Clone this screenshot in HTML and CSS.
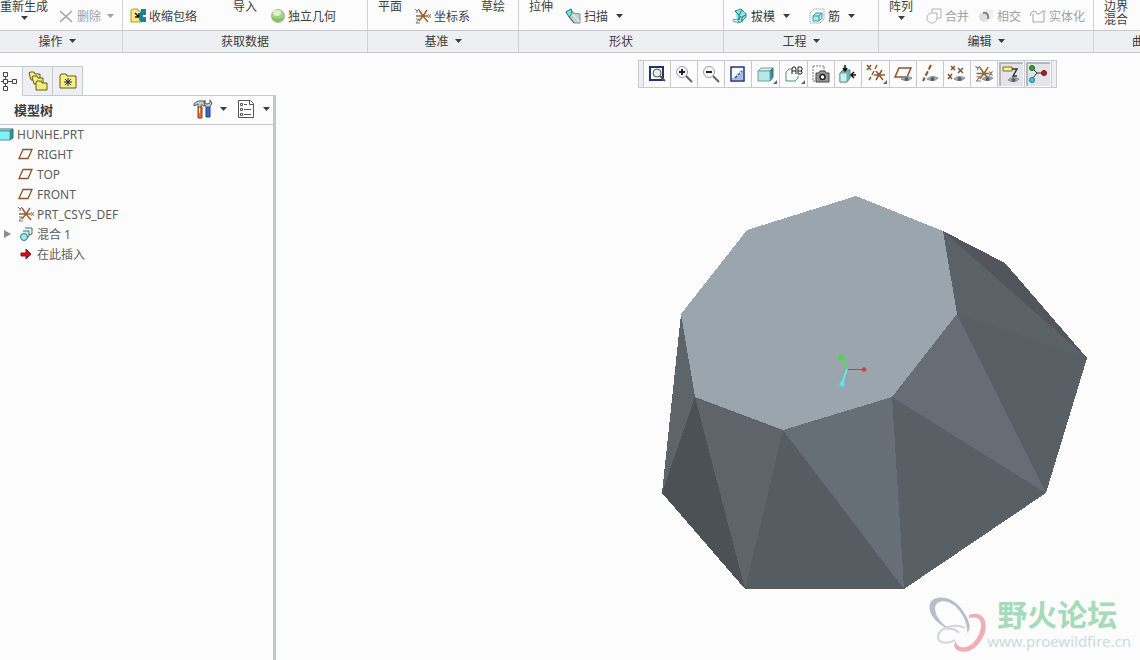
FILE: index.html
```html
<!DOCTYPE html>
<html lang="zh-CN">
<head>
  <meta charset="UTF-8">
  <meta name="viewport" content="width=device-width, initial-scale=1.0">
  <title>HUNHE.PRT</title>
  <link rel="stylesheet" href="styles.css">
</head>
<body>
  <!-- shared icon parts -->
  <svg class="defs" aria-hidden="true">
    <symbol id="caret" viewBox="0 0 7 4"><path d="M0 0h7L3.5 4z" fill="currentColor"/></symbol>
    <symbol id="csys" viewBox="0 0 16 16">
      <path d="M1 8h12M8 8L4 2M8 8l4-6M8 8l-4 5M8 8l5 6" stroke="#9a6231" stroke-width="1.5" fill="none"/>
      <path d="M0 1l2 2 2-2M2 3v2M13 6l3 4M16 6l-3 4M1 11h3l-3 4h4" stroke="#777" fill="none"/>
    </symbol>
    <symbol id="plane" viewBox="0 0 16 16"><path d="M5 3.5h9l-4 9H1z" fill="none" stroke="#8a5328" stroke-width="1.3"/></symbol>
    <symbol id="eye" viewBox="0 0 12 8">
      <path d="M0 4Q5-1 12 3Q7 8 0 4z" fill="#a9adb1" stroke="#84888c"/>
      <circle cx="6" cy="4" r="2.2" fill="#52616c"/>
    </symbol>
  </svg>

  <div class="ribbon">
    <div class="group clipped">
      <div class="tools">
        <button class="big">重新生成<svg class="caret"><use href="#caret"/></svg></button>
        <button class="small" disabled>
          <svg class="icon" viewBox="0 0 16 16"><path d="M0 3l12 11M12 3L0 14" stroke="#a3a3a3" stroke-width="1.5"/></svg>
          删除<svg class="caret"><use href="#caret"/></svg>
        </button>
      </div>
      <button class="caption">操作<svg class="caret"><use href="#caret"/></svg></button>
    </div>
    <div class="group">
      <div class="tools shrink">
        <button class="small">
          <svg class="icon" viewBox="0 0 16 16">
            <path d="M1 2l2-1h5v2h4v11H1z" fill="#f7ec78" stroke="#a79d35"/>
            <path d="M9 4h2V1h5v6h-3v2h3v5h-5l-2-2z" fill="#178789"/>
            <path d="M5 4h5v6H5z" fill="#fff"/>
            <path d="M5 5l4 4M9 5v4H5" stroke="#111" stroke-width="1.5" fill="none"/>
          </svg>
          收缩包络
        </button>
        <button class="big">导入</button>
        <button class="small">
          <svg class="icon" viewBox="0 0 16 16">
            <circle cx="9" cy="8" r="6.5" fill="#a3d283" stroke="#b4b5b0"/>
            <path d="M3 9q6 3 12 0a6 5 0 0 1-12 0z" fill="#86c067"/>
            <ellipse cx="8" cy="5" rx="4" ry="3" fill="#dcf2cd"/>
          </svg>
          独立几何
        </button>
      </div>
      <div class="caption">获取数据</div>
    </div>
    <div class="group">
      <div class="tools datum">
        <button class="big">平面</button>
        <button class="small"><svg class="icon"><use href="#csys"/></svg>坐标系</button>
        <button class="big">草绘</button>
      </div>
      <button class="caption">基准<svg class="caret"><use href="#caret"/></svg></button>
    </div>
    <div class="group">
      <div class="tools">
        <button class="big">拉伸</button>
        <button class="small">
          <svg class="icon" viewBox="0 0 16 16">
            <path d="M1 4l5-3 2 4 7 1v9H9L5 9z" fill="#c4d2d4" stroke="#7b9094"/>
            <path d="M1 4l5-3 1 4-3 4z" fill="#72e3e5" stroke="#2a7f83"/>
            <path d="M4 9l5 6" stroke="#1e6468"/>
            <path d="M7 6l8 8" stroke="#fff"/>
          </svg>
          扫描<svg class="caret"><use href="#caret"/></svg>
        </button>
      </div>
      <div class="caption">形状</div>
    </div>
    <div class="group">
      <div class="tools wide">
        <button class="small">
          <svg class="icon" viewBox="0 0 16 16">
            <path d="M3 3l6-2 5 5v4l-4 4-4 1z" fill="#8fe6e8"/>
            <path d="M3 3l6-2 5 5v3l-5 5-4 1" fill="none" stroke="#3a8e90"/>
            <path d="M3 3l4 4v5M7 7l3-5M10 14V9l4-2M1 12h5l3-4" fill="none" stroke="#206d70"/>
            <path d="M1 12l4-1 2 3H2z" fill="#d5f5f3" stroke="#6aa9aa"/>
          </svg>
          拔模<svg class="caret"><use href="#caret"/></svg>
        </button>
        <button class="small">
          <svg class="icon" viewBox="0 0 16 16">
            <path d="M1 5l4-4h10v10l-4 4H1zM11 15l4-4" fill="none" stroke="#7f8a8c" stroke-dasharray="1 1"/>
            <path d="M4 8l3-3h6v5l-3 3H4z" fill="#a5eeee" stroke="#3b9b9d"/>
            <path d="M4 8h6v5M10 8l3-3" fill="none" stroke="#3b9b9d"/>
          </svg>
          筋<svg class="caret"><use href="#caret"/></svg>
        </button>
      </div>
      <button class="caption">工程<svg class="caret"><use href="#caret"/></svg></button>
    </div>
    <div class="group">
      <div class="tools edit">
        <button class="big">阵列<svg class="caret"><use href="#caret"/></svg></button>
        <button class="small" disabled>
          <svg class="icon" viewBox="0 0 16 16"><path d="M6 5V1h9v9h-4a5 5 0 1 1-5-5h5v5" fill="none" stroke="#b3b3b3"/></svg>
          合并
        </button>
        <button class="small" disabled>
          <svg class="icon" viewBox="0 0 16 16">
            <path d="M6 1h9v9l-4 2z" fill="#eeeeee"/>
            <circle cx="6" cy="9" r="5" fill="#dedede"/>
            <path d="M5 5q6-1 5 6" fill="none" stroke="#858585" stroke-width="2"/>
          </svg>
          相交
        </button>
        <button class="small" disabled>
          <svg class="icon" viewBox="0 0 16 16"><path d="M0 8q1-5 4-5 2 0 3 3h2l4-3h3M3 6v8h11V4" fill="none" stroke="#a5a5a5"/></svg>
          实体化
        </button>
      </div>
      <button class="caption">编辑<svg class="caret"><use href="#caret"/></svg></button>
    </div>
    <div class="group">
      <div class="tools">
        <button class="big">边界<br>混合</button>
      </div>
      <button class="caption">曲面<svg class="caret"><use href="#caret"/></svg></button>
    </div>
  </div>

  <div class="workspace">
    <aside class="navigator">
      <div class="tabs">
        <button class="tab active" aria-label="模型树">
          <svg viewBox="0 0 20 20"><path d="M5.500 1.500h4v4h-4zM5.500 8.500h4v4h-4zM5.500 15.500h4v4h-4zM14.500 8.500h4v4h-4zM7.500 5.500v3M7.500 12.500v3M9.500 10.500h5M3 10.500h2" fill="none" stroke="#444"/></svg>
        </button>
        <button class="tab" aria-label="文件夹">
          <svg viewBox="0 0 20 20" fill="#f5ed79" stroke="#5f5a20">
            <path d="M1 2l1-1h4l1 2h5v6H3z"/><path d="M4 6l1-1h4l1 2h5v6H6z"/><path d="M8 11l1-1h4l1 2h5v7H8z"/>
          </svg>
        </button>
        <button class="tab" aria-label="收藏夹">
          <svg viewBox="0 0 20 20">
            <path d="M2 5l1-2h5l1 2h9v12H2z" fill="#f8f17a" stroke="#5f5a20"/>
            <path d="M10 7v8M6 11h8M7 8l6 6M13 8l-6 6" stroke="#15206b"/>
          </svg>
        </button>
      </div>
      <div class="panel">
        <div class="panel-head">
          <h1>模型树</h1>
          <button aria-label="设置">
            <svg class="tool" viewBox="0 0 20 20">
              <path d="M5 8h4v11H5z" fill="#e5762a" stroke="#823c14"/>
              <path d="M6.500 8v6" stroke="#fff"/>
              <path d="M1 5q3-4 9-3l2 2v3h-2V6H8v2H5V5L1 7z" fill="#c6cbd0" stroke="#5b5f63"/>
              <path d="M13 8h4v10h-4z" fill="#2f6cc9" stroke="#1e3c76"/>
              <path d="M12 1v3l2 1 3-1V1l2 3-2 4h-4l-2-4z" fill="#c6cbd0" stroke="#5b5f63"/>
            </svg>
            <svg class="caret"><use href="#caret"/></svg>
          </button>
          <button aria-label="显示">
            <svg class="tool" viewBox="0 0 20 20">
              <path d="M2.500 1.500h12l3 3v14h-15z" fill="#fff" stroke="#555"/>
              <path d="M13.500 1.500v4h4M8 5.500h3M8 10.500h7M8 15.500h7" fill="none" stroke="#555"/>
              <path d="M4.500 4.500h2v2h-2zM4.500 9.500h2v2h-2zM4.500 14.500h2v2h-2z" fill="none" stroke="#555"/>
            </svg>
            <svg class="caret"><use href="#caret"/></svg>
          </button>
        </div>
        <ul class="tree">
          <li class="root">
            <svg class="icon" viewBox="0 0 16 16">
              <path d="M0 5l2-2h13l-2 2z" fill="#c8ffff" stroke="#2d7779"/>
              <path d="M12 5l3-2v9l-3 2z" fill="#349295" stroke="#2d7779"/>
              <path d="M0 5h12v9H0z" fill="#7ff3f5" stroke="#4d9799"/>
            </svg>HUNHE.PRT
          </li>
          <li><svg class="icon"><use href="#plane"/></svg>RIGHT</li>
          <li><svg class="icon"><use href="#plane"/></svg>TOP</li>
          <li><svg class="icon"><use href="#plane"/></svg>FRONT</li>
          <li><svg class="icon"><use href="#csys"/></svg>PRT_CSYS_DEF</li>
          <li class="branch">
            <svg class="arrow" viewBox="0 0 8 8"><path d="M0 0l7 4-7 4z" fill="#8c8c8c"/></svg>
            <svg class="icon" viewBox="0 0 16 16">
              <path d="M7 2h7v6l-3 1" fill="#e6f3f5" stroke="#3e747c"/>
              <path d="M5 5h6v5l-3 2" fill="#d4eef0" stroke="#3e747c"/>
              <circle cx="6" cy="11" r="3.5" fill="#9cecee" stroke="#2b7a80"/>
            </svg>混合 1
          </li>
          <li>
            <svg class="icon" viewBox="0 0 16 16"><path d="M3 7h5V3l5 5-5 5V10H3z" fill="#c8141c" stroke="#8c1015"/></svg>在此插入
          </li>
        </ul>
      </div>
    </aside>

    <main class="viewport">
      <div class="view-bar">
        <button aria-label="重新调整">
          <svg viewBox="0 0 20 20">
            <path d="M3 3h13v13H3z" fill="#fff" stroke="#1d3573" stroke-width="2"/>
            <circle cx="10" cy="9" r="4" fill="#e3eef5" stroke="#555"/><path d="M13 12l5 5" stroke="#6c4f4f" stroke-width="2"/>
          </svg>
        </button>
        <button aria-label="放大">
          <svg viewBox="0 0 20 20">
            <circle cx="8" cy="8" r="5.500" fill="#f7f9fa" stroke="#9ba0a5"/><path d="M8 5v6M5 8h6" stroke="#222" stroke-width="2"/>
            <path d="M12 12l6 6" stroke="#7b5652" stroke-width="2"/>
          </svg>
        </button>
        <button aria-label="缩小">
          <svg viewBox="0 0 20 20">
            <circle cx="8" cy="8" r="5.500" fill="#f7f9fa" stroke="#9ba0a5"/><path d="M5 8h6" stroke="#222" stroke-width="2"/>
            <path d="M12 12l6 6" stroke="#7b5652" stroke-width="2"/>
          </svg>
        </button>
        <button aria-label="重画">
          <svg viewBox="0 0 20 20">
            <path d="M3 3h13v14H3z" fill="#f4f8fd" stroke="#1d3573" stroke-width="1.500"/>
            <path d="M4 14q7 0 11-8v10H4z" fill="#9dbfe8"/><path d="M7 14l7-7" stroke="#33558c" stroke-width="1.500" stroke-dasharray="3 1"/>
          </svg>
        </button>
        <button class="more" aria-label="显示样式">
          <svg viewBox="0 0 20 20">
            <path d="M2 7l3-3h12l-3 3z" fill="#d6f4f3" stroke="#78a0a3"/><path d="M14 7l3-3v9l-3 4z" fill="#2f8d90" stroke="#2d7678"/>
            <path d="M2 7h12v10H2z" fill="#b5e9e8" stroke="#78a0a3"/>
          </svg>
        </button>
        <button class="more" aria-label="已命名视图">
          <svg viewBox="0 0 20 20">
            <path d="M8 5H5L2 8v9h9l3-3v-2" fill="none" stroke="#439095"/>
            <path d="M8 10V5l1-2h2l1 2v5M8 7h4M14 3h3l1 1v2l-1 1h-3M17 7l1 1v1l-1 1h-3V3" fill="none" stroke="#222"/>
          </svg>
        </button>
        <button aria-label="视图管理器">
          <svg viewBox="0 0 20 20">
            <path d="M2 2h11v5M2 2v15h4" fill="none" stroke="#777" stroke-dasharray="2 1"/>
            <path d="M5 9h3l1-2h5l1 2h3v9H5z" fill="#999994" stroke="#444"/><circle cx="11.500" cy="13" r="2.500" fill="#fff" stroke="#222" stroke-width="1.500"/>
          </svg>
        </button>
        <button aria-label="透视">
          <svg viewBox="0 0 20 20">
            <path d="M2 9l3-3h7v8l-3 4H2z" fill="#62b9ba" stroke="#577f82"/><path d="M2 9h7v9H2z" fill="#c7efee" stroke="#78a0a3"/>
            <path d="M7 1v6M5 4l2 3 2-3M18 11h-5M16 8l-3 3 3 3" fill="none" stroke="#111" stroke-width="1.500"/>
          </svg>
        </button>
        <button class="more" aria-label="基准显示过滤器">
          <svg viewBox="0 0 20 20" fill="none" stroke="#8b592f" stroke-width="1.500">
            <path d="M1 1l4 5M5 1L1 6M11 1L9 5M8 7l-2 4M5 13l-2 3M8 11h11M10 7l7 9M16 6l-6 10"/>
          </svg>
        </button>
        <button aria-label="平面显示">
          <svg viewBox="0 0 20 20">
            <path d="M6 4h12l-4 9H2z" fill="none" stroke="#8b532a" stroke-width="1.500"/><use href="#eye" x="8" y="11" width="11" height="8"/>
          </svg>
        </button>
        <button aria-label="轴显示">
          <svg viewBox="0 0 20 20">
            <path d="M11 1L3 17" stroke="#8b532a" stroke-width="2" stroke-dasharray="5 2"/><use href="#eye" x="7" y="11" width="11" height="8"/>
          </svg>
        </button>
        <button aria-label="点显示">
          <svg viewBox="0 0 20 20">
            <path d="M4 2l4 4M8 2L4 6M11 4l5 5M16 4l-5 5M1 10l4 5M5 10l-4 5" stroke="#8b532a" stroke-width="1.500"/><use href="#eye" x="7" y="11" width="11" height="8"/>
          </svg>
        </button>
        <button aria-label="坐标系显示">
          <svg viewBox="0 0 20 20">
            <use href="#csys" x="1" y="1" width="18" height="17"/><use href="#eye" x="8" y="11" width="11" height="8"/>
          </svg>
        </button>
        <button class="pressed" aria-label="注释显示" aria-pressed="true">
          <svg viewBox="0 0 20 20">
            <path d="M2 3h9v4H2z" fill="#fbf487" stroke="#78702b"/><path d="M11 5h5l-4 7h4" fill="none" stroke="#333" stroke-width="1.500"/>
            <use href="#eye" x="7" y="12" width="11" height="8"/>
          </svg>
        </button>
        <button class="pressed" aria-label="旋转中心" aria-pressed="true">
          <svg viewBox="0 0 20 20">
            <path d="M4 4l5 5-5 6M9 9h7" fill="none" stroke="#333"/>
            <circle cx="4" cy="4" r="2.500" fill="#2da52d" stroke="#176d17"/><circle cx="4" cy="16" r="2.500" fill="#41c5e8" stroke="#25748b"/><circle cx="16" cy="9" r="2.500" fill="#b51c24" stroke="#6e1116"/>
          </svg>
        </button>
      </div>

      <svg class="model" viewBox="662 196 426 393" shape-rendering="crispEdges">
        <!-- side facets -->
        <path d="M943 231L1005 263L1087 358z" fill="#52565c"/>
        <path d="M943 231L957 314L1087 358z" fill="#5b6267"/>
        <path d="M957 314L1087 358L1046 493z" fill="#586065"/>
        <path d="M957 314L892 397L1046 493z" fill="#666d74"/>
        <path d="M892 397L1046 493L904 589z" fill="#596065"/>
        <path d="M892 397L783 430L904 589z" fill="#676f76"/>
        <path d="M783 430L904 589H745z" fill="#575b62"/>
        <path d="M783 430L695 397L745 589z" fill="#5f646b"/>
        <path d="M695 397L745 589L662 493z" fill="#4b5154"/>
        <path d="M681 314L695 397L662 493z" fill="#5d656b"/>
        <!-- top face -->
        <path d="M747 230L856 196L943 231L957 314L892 397L783 430L695 397L681 314z" fill="#9aa5ad"/>
        <!-- spin center -->
        <g shape-rendering="auto" fill="none">
          <path d="M847 369.500H864" stroke="#d83a45"/>
          <path d="M847 369Q846 362 842 358" stroke="#55db5a" stroke-width="2"/>
          <path d="M847 369Q844 377 842 384" stroke="#68e6ee" stroke-width="2"/>
          <circle cx="864" cy="369.500" r="2.300" fill="#d83a45"/>
          <circle cx="841" cy="357.500" r="3" fill="#43dc49"/>
          <circle cx="842" cy="384" r="2.500" fill="#52eaf2"/>
        </g>
      </svg>

      <div class="watermark">
        <svg viewBox="0 0 58 56" fill="none">
          <path fill-rule="evenodd" fill="#b4bfcb" d="M1 7C4-3 24-2 34 14C42 26 42 32 38 36C39 30 36 20 29 12C20 2 7 2 6 11C6 20 14 29 24 33C10 30-2 17 1 7z"/>
          <path fill-rule="evenodd" fill="#eeafb3" d="M40 18C54 13 60 25 55 38C49 52 37 58 28 53C24 50 25 46 27 44C27 49 31 51 37 50C45 48 51 38 52 30C53 22 48 19 40 21z"/>
          <path d="M36 31C24 25 9 32 9 40C9 47 20 47 26 43M18 32Q26 31 30 36" stroke="#d2d6da" stroke-width="2"/>
        </svg>
        <div>
          <strong>野火论坛</strong>
          <span>www.proewildfire.cn</span>
        </div>
      </div>
    </main>
  </div>
</body>
</html>
```
FILE: styles.css
```css
* {
  margin: 0;
  padding: 0;
  box-sizing: border-box;
}
body {
  display: flex;
  flex-direction: column;
  height: 100vh;
  overflow: hidden;
  background: #fcfcfc;
  color: #3c3c3c;
  font-family: 'Noto Sans', 'Noto Sans CJK SC', sans-serif;
  font-size: 12px;
}
button {
  border: none;
  background: none;
  color: inherit;
  font: inherit;
}
.defs {
  position: absolute;
  width: 0;
  height: 0;
}
.icon {
  flex: none;
  width: 16px;
  height: 16px;
}
.caret {
  flex: none;
  width: 7px;
  height: 4px;
}

/* ribbon */
.ribbon {
  display: grid;
  grid-template-columns: 123px 245px 151px 205px 155px 215px minmax(114px, 1fr);
  flex: none;
  overflow: hidden;
}
.group {
  display: flex;
  flex-direction: column;
  border-right: 1px solid #d0d1d5;
}
.group.clipped {
  margin-left: -8px;
}
.clipped .tools {
  margin-left: -2px;
}
.tools {
  display: flex;
  align-items: flex-start;
  height: 30px;
  overflow: hidden;
  white-space: nowrap;
}
.big {
  display: flex;
  flex-direction: column;
  align-items: center;
  gap: 3px;
  padding: 0 12px 0 10px;
  line-height: 13px;
}
.small {
  display: flex;
  align-items: center;
  gap: 3px;
  height: 20px;
  margin-top: 6px;
}
.small .caret {
  margin-left: 5px;
}
.small:disabled {
  color: #a0a0a0;
}
.clipped .small {
  gap: 1px;
}
.shrink {
  padding-left: 7px;
}
.shrink .big {
  margin-left: 26px;
}
.datum {
  gap: 1px;
}
.wide {
  gap: 19px;
  padding-left: 8px;
}
.edit {
  gap: 9px;
}
.edit .big {
  margin-right: -8px;
}
.caption {
  display: flex;
  align-items: center;
  justify-content: center;
  gap: 6px;
  height: 23px;
  padding-bottom: 2px;
  border-top: 1px solid #c8c9cd;
  border-bottom: 1px solid #c8c9cd;
  background: #eeeff2;
}

/* navigator */
.workspace {
  display: flex;
  flex: 1;
  min-height: 0;
}
.navigator {
  display: flex;
  flex-direction: column;
  flex: none;
  width: 276px;
  padding-top: 13px;
}
.tabs {
  display: flex;
  height: 30px;
}
.tab {
  display: flex;
  align-items: center;
  justify-content: center;
  width: 30px;
  border: 1px solid #c8c9cd;
  border-left: none;
  background: #eeeff2;
}
.tab.active {
  position: relative;
  justify-content: flex-end;
  width: 23px;
  padding-right: 4px;
  border-bottom-color: #fcfcfc;
  background: #fcfcfc;
}
.tab svg {
  flex: none;
  width: 20px;
  height: 20px;
}
.panel {
  flex: 1;
  margin-top: -1px;
  border-top: 1px solid #c8c9cd;
  border-right: 3px solid #c5c6cb;
}
.panel-head {
  display: flex;
  align-items: center;
  gap: 9px;
  height: 29px;
  padding: 0 3px 2px 14px;
  border-bottom: 1px solid #c8c9cd;
}
.panel-head h1 {
  flex: 1;
  font-size: 13px;
}
.panel-head button {
  display: flex;
  align-items: center;
  gap: 7px;
}
.tool {
  width: 20px;
  height: 20px;
}
.tree {
  margin-top: -1px;
  list-style: none;
  color: #5c5c5c;
}
.tree li {
  display: flex;
  align-items: center;
  gap: 3px;
  height: 20px;
  padding-left: 18px;
}
.tree .root {
  margin-left: -20px;
}
.tree .branch {
  padding-left: 4px;
}
.arrow {
  width: 8px;
  height: 8px;
  margin-right: 3px;
}

/* graphics area */
.viewport {
  position: relative;
  display: flex;
  flex-direction: column;
  align-items: flex-end;
  flex: 1;
  padding-top: 7px;
}
.view-bar {
  display: flex;
  flex: none;
  height: 28px;
  margin-right: 83px;
  padding: 0 4px;
  border: 1px solid #c8c9cd;
  background: #eeeff2;
}
.view-bar button {
  position: relative;
  display: flex;
  align-items: center;
  justify-content: center;
  width: 27px;
  border-left: 1px solid #c8c9cd;
  background: #fcfcfc;
}
.view-bar button:last-child {
  width: 28px;
  border-right: 1px solid #c8c9cd;
}
.view-bar .more {
  width: 28px;
}
.view-bar .more::after {
  content: '';
  position: absolute;
  right: 2px;
  bottom: 3px;
  border: 2px solid #666;
  border-top-color: transparent;
  border-left-color: transparent;
}
.view-bar .pressed {
  background: #e2e4e9;
  box-shadow: inset 0 0 0 1px #fcfcfc, inset 2px 2px 0 1px #b3b5bb;
}
.view-bar svg {
  width: 20px;
  height: 20px;
}
.model {
  flex: none;
  width: 426px;
  margin: 108px 52px 0 0;
}
.watermark {
  position: absolute;
  right: 9px;
  bottom: 7px;
  display: flex;
}
.watermark svg {
  width: 58px;
  height: 56px;
}
.watermark div {
  display: flex;
  flex-direction: column;
}
.watermark strong {
  padding-left: 10px;
  color: #a5dbb8;
  font-family: 'Noto Sans CJK SC', sans-serif;
  font-size: 30px;
  line-height: 32px;
}
.watermark span {
  color: #c8dddc;
  font-size: 15px;
  line-height: 24px;
}
```
